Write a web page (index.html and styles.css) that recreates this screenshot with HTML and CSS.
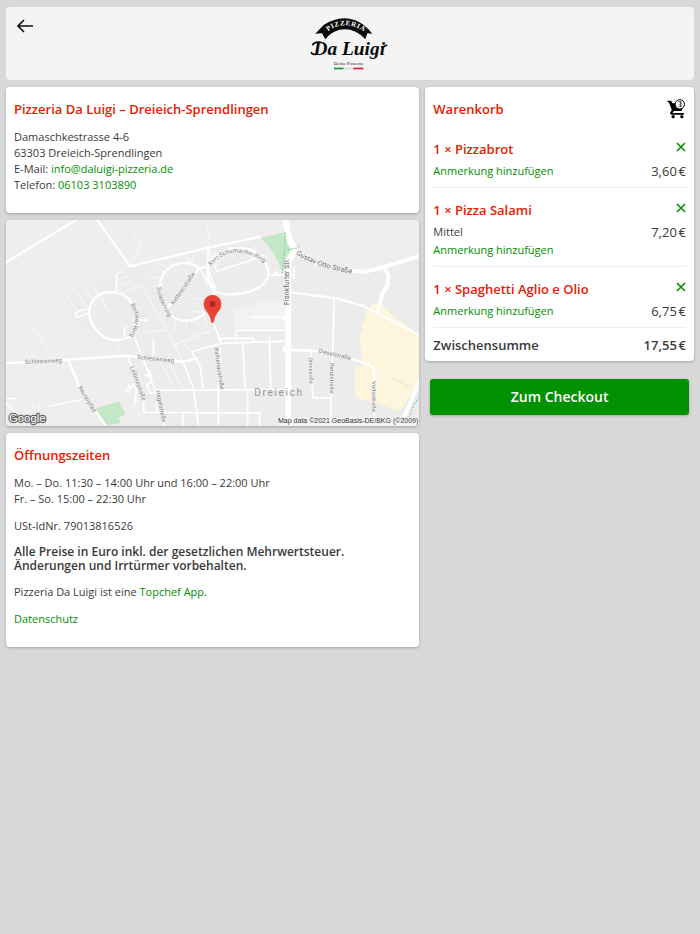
FILE: index.html
```
<!DOCTYPE html>
<html lang="de">
<head>
    <meta charset="UTF-8">
    <meta name="viewport" content="width=device-width, initial-scale=1.0">
    <title>Pizzeria Da Luigi – Warenkorb</title>
    <link rel="stylesheet" href="styles.css">
</head>
<body>
    <header class="header card">
        <a href="#" class="back" aria-label="Zurück">
            <svg viewBox="0 0 16 14" width="16" height="14" fill="none" stroke="#111" stroke-width="1.6">
                <path d="M7 1 1 7l6 6M1 7h15"/>
            </svg>
        </a>
        <!-- Logo -->
        <svg class="logo" viewBox="0 0 300 210" role="img" aria-label="Pizzeria Da Luigi">
            <path fill="#0a0a0a" d="M46 71Q64 52 72 44C110 18 158 18 190 44Q206 56 217 71L202 70 196 88C160 48 108 48 76 88L66 70Z"/>
            <path id="logoArc" fill="none" d="M80 68C112 38 154 38 198 68"/>
            <text class="logo-arc"><textPath href="#logoArc" startOffset="50%">PIZZERIA</textPath></text>
            <text class="logo-name" x="148" y="134">Da Luigi</text>
            <path fill="none" stroke="#0a0a0a" stroke-width="5" stroke-linecap="round" d="M50 132Q38 136 34 128M62 97Q46 94 38 104M246 112 260 106"/>
            <text class="logo-sub" x="145" y="165">Deine Pizzeria</text>
            <path fill="#159447" d="M102 173h29v5h-29z"/>
            <path fill="#dcdcdc" d="M131 173h29v5h-29z"/>
            <path fill="#e2183a" d="M160 173h30v5h-30z"/>
        </svg>
    </header>

    <div class="layout">
        <main class="column">
            <section class="card info">
                <h2>Pizzeria Da Luigi – Dreieich-Sprendlingen</h2>
                <p>
                    Damaschkestrasse 4-6<br>
                    63303 Dreieich-Sprendlingen<br>
                    E-Mail: <a href="mailto:info@daluigi-pizzeria.de">info@daluigi-pizzeria.de</a><br>
                    Telefon: <a href="tel:061033103890">06103 3103890</a>
                </p>
            </section>

            <section class="card map">
                <svg viewBox="18 15 1239 618" preserveAspectRatio="xMidYMid slice" role="img" aria-label="Karte Dreieich">
                    <path fill="#efeeec" d="M18 15h1239v618H18z"/>
                    <path fill="#ececec" d="M390 154 860 50 870 100 940 150 1050 175 1257 130V633H500L420 560 370 425 230 340 190 240Z"/>
                    <path fill="#f1f2f4" d="M700 280 755 275 775 258H852V340H700Z"/>
                    <!-- Parks -->
                    <path fill="#c3e8c5" d="M780 70 855 52 862 90 873 102 856 130 847 172Q825 105 780 70ZM284 580 357 560 377 597 355 608 362 622 318 633Z"/>
                    <!-- Gewerbegebiet -->
                    <path fill="#fdf5dc" d="M1112 265 1130 264 1165 280 1166 292 1257 360V500L1200 588 1065 545V460L1088 450 1075 355 1086 352 1084 323 1095 320V288L1112 282Z"/>
                    <path fill="none" stroke="#e7e4da" stroke-width="3" d="M1172 488 1230 516"/>

                    <g class="road thin">
                        <path d="M400 35 398 50 422 92 390 154M98 340 167 432M355 375V420M360 235 424 210 500 345 405 352M500 345 548 440"/>
                        <path d="M195 238 230 283M220 218 260 275M250 215 285 270M276 205 324 287M305 245 322 280M315 192 370 168M349 195 386 182M349 212 388 198"/>
                        <path d="M455 157 490 170M472 142 505 160M445 185 490 190M450 210 480 212M498 135 520 153M560 125 570 145M580 125 568 145M528 320 518 345M560 318 557 345M588 312 600 340M610 300 622 330M570 290H610M585 250H635"/>
                        <path d="M525 388 645 340M550 380 575 410M615 15 628 60 625 98M482 445 522 520M510 445 548 520M95 560 105 590M115 565 118 600"/>
                        <path d="M645 120 650 150M660 105 670 130M690 90 700 115M735 90 728 120M765 95 750 130M790 120 765 140M800 125 775 148M625 100 650 120M612 180 630 250 645 320"/>
                    </g>
                    <g class="road small">
                        <path d="M349 180V232M413 315H442M460 370V420M373 365V340L377 335"/>
                        <path d="M265 280 232 290Q222 298 232 306L268 294"/>
                        <path d="M142 574 245 553M18 550H50M18 565 55 600M383 425 400 470 430 560 432 592H500L780 594M400 358 440 460 472 545 495 633M472 525H600L852 523M442 460 455 485 435 480M455 500 440 510 452 535 470 530"/>
                        <path d="M378 528 400 510 410 525 402 572M385 510 392 520M548 592V633M470 592V560L480 555M595 633 580 520 548 438M655 520V633M742 523V633"/>
                        <path d="M575 410 660 385 852 378M575 410 600 455 609 520M665 385 655 370H760V380M706 380V350L712 345H852M728 385 735 523M808 365V400L812 523M778 590V633M752 307H848M660 400 655 520"/>
                        <path d="M932 412 938 548H990M1002 252 990 633M1122 460V600M635 310 648 345 660 375M645 210 640 240M805 180H880M882 155V190M820 180 825 170 835 175"/>
                        <path d="M632 120 645 155 650 170 690 155 770 130 790 120M598 160 640 225 636 240M622 155 642 215"/>
                    </g>
                    <g class="road mid">
                        <path d="M18 142 228 15M292 15 390 154 625 98 780 66M18 444 200 434 375 422 548 440 590 430"/>
                        <path d="M205 435 240 520 318 633"/>
                        <path d="M267 292C270 215 375 215 398 270 425 310 415 350 385 368 310 395 270 335 267 292Z"/>
                        <path d="M598 160C570 135 520 140 495 170 470 200 475 270 520 306 545 325 590 318 612 295"/>
                        <path d="M598 160 505 275M625 98 622 155 598 160M645 235 625 195C615 150 625 120 690 102 755 90 790 120 803 160 815 205 760 240 680 238L645 230 632 245"/>
                        <path d="M868 232 1010 250 1095 275 1257 360M1133 288 1145 240"/>
                        <path d="M868 405 945 407 1050 430 1110 450 1122 465V500"/>
                    </g>
                    <g class="road big">
                        <path d="M857 15C860 60 870 80 885 105M880 115 866 135 864 200V633"/>
                    </g>
                    <g class="road wide">
                        <path d="M885 105C930 145 1000 165 1085 170 1150 165 1200 135 1257 125"/>
                        <path d="M1155 165 1164 180 1162 210 1145 240 1133 285M1257 500 1200 633"/>
                    </g>
                    <circle fill="#fff" cx="859" cy="404" r="12"/>
                    <circle fill="#fff" cx="858" cy="310" r="10"/>
                    <path class="trail" d="M855 50 854 100 846 175M862 105 893 98 900 88M1257 545 1240 570 1225 610"/>

                    <!-- Straßennamen -->
                    <g class="street">
                        <path id="s1" d="M75 447 190 441"/><text><textPath href="#s1">Schlesienweg</textPath></text>
                        <path id="s2" d="M411 432 540 444"/><text><textPath href="#s2">Schlesienweg</textPath></text>
                        <path id="s3" d="M390 268Q412 305 402 325 398 345 386 374"/><text><textPath href="#s3">Berliner Ring</textPath></text>
                        <path id="s4" d="M471 217Q475 265 515 320"/><text><textPath href="#s4">Sudetenring</textPath></text>
                        <path id="s5" d="M521 270 605 148"/><text><textPath href="#s5">Kettelerstraße</textPath></text>
                        <path id="s6" d="M632 152Q700 72 810 155"/><text><textPath href="#s6">Kurt-Schumacher-Ring</textPath></text>
                        <path id="s7" d="M390 456 435 580"/><text><textPath href="#s7">Leibnizstraße</textPath></text>
                        <path id="s8" d="M467 527 492 650"/><text><textPath href="#s8">Hegelstraße</textPath></text>
                        <path id="s9" d="M234 517 290 610"/><text><textPath href="#s9">Reuterpfad</textPath></text>
                        <path id="s10" d="M642 398 664 550"/><text><textPath href="#s10">Rathenaustraße</textPath></text>
                        <path id="s11" d="M953 412 1070 440"/><text><textPath href="#s11">Dieselstraße</textPath></text>
                        <path id="s12" d="M925 427 930 540"/><text class="tiny"><textPath href="#s12">Ohmstraße</textPath></text>
                        <path id="s13" d="M988 444V560"/><text><textPath href="#s13">Benzstraße</textPath></text>
                        <path id="s14" d="M1115 498V620"/><text><textPath href="#s14">Voltastraße</textPath></text>
                    </g>
                    <g class="street main">
                        <path id="s15" d="M867 270V100"/><text><textPath href="#s15">Frankfurter Str.</textPath></text>
                        <path id="s16" d="M887 118Q960 165 1090 180"/><text><textPath href="#s16">Gustav-Otto-Straße</textPath></text>
                    </g>
                    <text class="town" x="762" y="543">Dreieich</text>

                    <!-- Marker -->
                    <path fill="#ea4335" stroke="#c5362b" stroke-width="1" d="M637 323C634 323 633 320 632 313 629 293 611 288 611 266A26 26 0 0 1 663 266C663 288 645 293 642 313 641 320 640 323 637 323Z"/>
                    <circle fill="#a52a21" cx="637" cy="267" r="9"/>

                    <text class="google" x="27" y="620">Google</text>
                    <path fill="#f5f5f5" fill-opacity=".75" d="M828 606h429v27H828z"/>
                    <text class="credit" x="1254" y="625">Map data ©2021 GeoBasis-DE/BKG (©2009)</text>
                </svg>
            </section>

            <section class="card info">
                <h2>Öffnungszeiten</h2>
                <p>
                    Mo. – Do. 11:30 – 14:00 Uhr und 16:00 – 22:00 Uhr<br>
                    Fr. – So. 15:00 – 22:30 Uhr
                </p>
                <p>USt-IdNr. 79013816526</p>
                <p class="notice">Alle Preise in Euro inkl. der gesetzlichen Mehrwertsteuer.<br>Änderungen und Irrtürmer vorbehalten.</p>
                <p>Pizzeria Da Luigi ist eine <a href="#">Topchef App</a>.</p>
                <p><a href="#">Datenschutz</a></p>
            </section>
        </main>

        <aside class="column">
            <section class="card cart">
                <div class="cart-head">
                    <h2>Warenkorb</h2>
                    <svg class="cart-icon" viewBox="0 0 56 60" role="img" aria-label="3 Artikel">
                        <path d="M1 5h11l4 8h36l-9 23H20l-4 6h34v5H13q-7-2-3-8l4-6L5 10H1z"/>
                        <circle cx="18" cy="53" r="5"/>
                        <circle cx="44" cy="53" r="5"/>
                        <circle class="badge" cx="38" cy="16" r="14"/>
                        <text x="38" y="24">3</text>
                    </svg>
                </div>

                <ul class="items">
                    <li class="item">
                        <div class="item-row">
                            <h3>1 × Pizzabrot</h3>
                            <button class="remove" aria-label="Pizzabrot entfernen">
                                <svg viewBox="0 0 10 10" width="10" height="10"><path d="M1 1l8 8M9 1 1 9"/></svg>
                            </button>
                        </div>
                        <div class="item-row">
                            <div class="item-notes">
                                <a href="#">Anmerkung hinzufügen</a>
                            </div>
                            <span class="price">3,60&#8239;€</span>
                        </div>
                    </li>
                    <li class="item">
                        <div class="item-row">
                            <h3>1 × Pizza Salami</h3>
                            <button class="remove" aria-label="Pizza Salami entfernen">
                                <svg viewBox="0 0 10 10" width="10" height="10"><path d="M1 1l8 8M9 1 1 9"/></svg>
                            </button>
                        </div>
                        <div class="item-row">
                            <div class="item-notes">
                                <span>Mittel</span>
                                <a href="#">Anmerkung hinzufügen</a>
                            </div>
                            <span class="price">7,20&#8239;€</span>
                        </div>
                    </li>
                    <li class="item">
                        <div class="item-row">
                            <h3>1 × Spaghetti Aglio e Olio</h3>
                            <button class="remove" aria-label="Spaghetti Aglio e Olio entfernen">
                                <svg viewBox="0 0 10 10" width="10" height="10"><path d="M1 1l8 8M9 1 1 9"/></svg>
                            </button>
                        </div>
                        <div class="item-row">
                            <div class="item-notes">
                                <a href="#">Anmerkung hinzufügen</a>
                            </div>
                            <span class="price">6,75&#8239;€</span>
                        </div>
                    </li>
                </ul>

                <div class="total">
                    <span>Zwischensumme</span>
                    <span>17,55&#8239;€</span>
                </div>
            </section>

            <button class="checkout">Zum Checkout</button>
        </aside>
    </div>
</body>
</html>
```
FILE: styles.css
```
* {
    box-sizing: border-box;
}
body {
    margin: 0;
    padding: 7px 6px;
    min-height: 100vh;
    background: #d8d8d8;
    color: #3a3a3a;
    font-family: 'Open Sans', sans-serif;
    font-size: 11px;
    line-height: 16px;
}
h2, h3, p, ul {
    margin: 0;
    padding: 0;
}
h2, h3 {
    color: #e42000;
    font-size: 13px;
    line-height: 20px;
    font-weight: 600;
}
a {
    color: #009000;
    text-decoration: none;
}
.card {
    background: #fff;
    border-radius: 4px;
    box-shadow: 0 1px 3px rgba(0, 0, 0, 0.25);
}
.header {
    display: grid;
    grid-template-columns: 1fr auto 1fr;
    background: #f4f4f4;
    box-shadow: none;
    padding: 3px 8px 0;
    margin-bottom: 7px;
}
.back {
    padding: 9px 3px;
}
.back svg {
    display: block;
}
.logo {
    width: 100px;
    height: 70px;
}
.logo text {
    text-anchor: middle;
}
.logo-arc {
    fill: #fff;
    font: bold 21px 'Liberation Serif', serif;
    letter-spacing: 2px;
}
.logo-name {
    fill: #0a0a0a;
    font: italic bold 58px 'Liberation Serif', serif;
}
.logo-sub {
    fill: #222;
    font: 15px 'Liberation Serif', serif;
}
.layout {
    display: grid;
    grid-template-columns: 20fr 13fr;
    gap: 6px;
    align-items: start;
}
.column {
    display: flex;
    flex-direction: column;
    gap: 7px;
    min-width: 0;
}
.info {
    padding: 12px 8px 20px;
}
.info h2 {
    margin-bottom: 10px;
}
.info p + p {
    margin-top: 11px;
}
.info .notice {
    font-size: 12px;
    line-height: 14px;
    font-weight: 600;
}

/* Karte */
.map {
    overflow: hidden;
}
.map svg {
    display: block;
    width: 100%;
    height: auto;
}
.road {
    fill: none;
    stroke: #fff;
    stroke-linejoin: round;
    stroke-linecap: round;
}
.thin {
    stroke: #f8f8f8;
    stroke-width: 3px;
}
.small {
    stroke-width: 5px;
}
.mid {
    stroke-width: 7px;
}
.wide {
    stroke-width: 12px;
}
.big {
    stroke-width: 18px;
}
.trail {
    fill: none;
    stroke: #8ccb9b;
    stroke-width: 3px;
    stroke-dasharray: 7 4;
}
.street path {
    fill: none;
}
.street text {
    fill: #7b7f83;
    stroke: #f7f7f7;
    stroke-width: 3px;
    paint-order: stroke;
    font: 18px Roboto, sans-serif;
}
.street .tiny {
    font-size: 16px;
}
.street.main text {
    fill: #5f6368;
    font-size: 21px;
}
.town {
    fill: #93979b;
    font: 30px Roboto, sans-serif;
    letter-spacing: 5px;
}
.google {
    fill: #fff;
    stroke: #666;
    stroke-width: 7px;
    paint-order: stroke;
    font: 34px 'Liberation Sans', sans-serif;
}
.credit {
    fill: #333;
    font: 21px 'Liberation Sans', sans-serif;
    text-anchor: end;
}

/* Warenkorb */
.cart {
    padding: 12px 8px 6px;
}
.cart-head, .item-row, .total {
    display: flex;
    justify-content: space-between;
}
.cart-head {
    margin-bottom: 8px;
}
.cart-icon {
    width: 19px;
    height: 20px;
}
.cart-icon .badge {
    fill: #fff;
    stroke: #000;
    stroke-width: 3px;
}
.cart-icon text {
    font: bold 23px 'Liberation Serif', serif;
    text-anchor: middle;
}
.items {
    list-style: none;
}
.item {
    padding: 12px 0 7px;
    border-bottom: 1px solid #eee;
}
.item h3 {
    margin-bottom: 3px;
}
.remove {
    display: block;
    align-self: flex-start;
    padding: 3px 0;
    border: none;
    background: none;
    cursor: pointer;
}
.remove svg {
    display: block;
    fill: none;
    stroke: #009000;
    stroke-width: 1.6;
}
.item-notes {
    display: flex;
    flex-direction: column;
    line-height: 18px;
}
.price {
    font-size: 13px;
    line-height: 18px;
}
.total {
    padding-top: 7px;
    font-size: 13px;
    line-height: 20px;
    font-weight: 600;
}
.checkout {
    margin: 11px 5px 0;
    padding: 8px;
    border: none;
    border-radius: 3px;
    background: #009000;
    color: #fff;
    box-shadow: 0 1px 3px rgba(0, 0, 0, 0.25);
    font-family: inherit;
    font-size: 14px;
    line-height: 20px;
    font-weight: 600;
    cursor: pointer;
}
```
